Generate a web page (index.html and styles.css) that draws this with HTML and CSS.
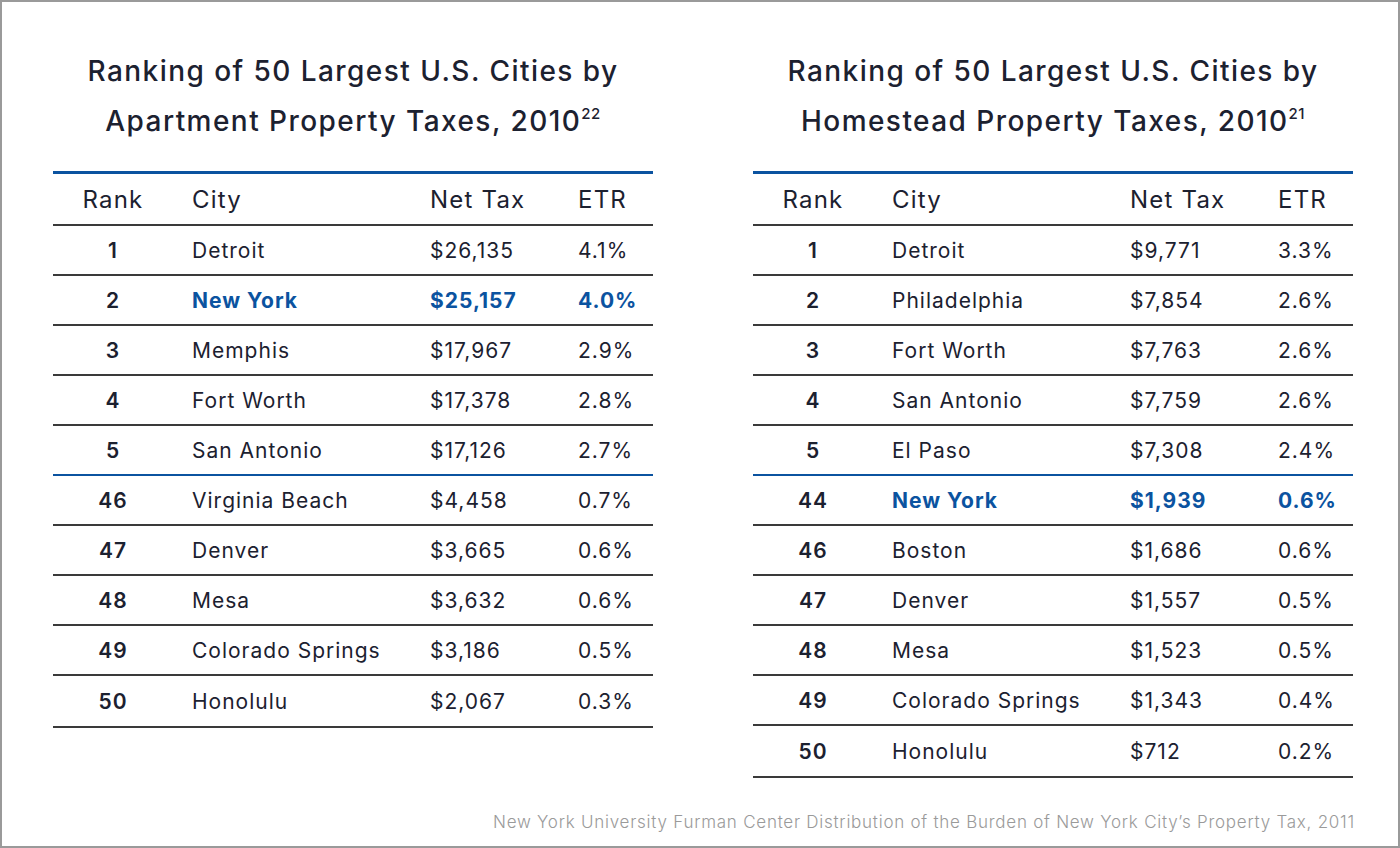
FILE: index.html
```html
<!DOCTYPE html>
<html>
<head>
<meta charset="utf-8">
<link rel="stylesheet" href="styles.css">
</head>
<body>
<div class="frame">
  <div class="panels">
    <section class="panel">
      <h2 class="title">Ranking of 50 Largest U.S. Cities by<br>Apartment Property Taxes, 2010<sup>22</sup></h2>
      <div class="table">
        <div class="row head"><span class="rank">Rank</span><span>City</span><span>Net Tax</span><span>ETR</span></div>
        <div class="row"><span class="rank">1</span><span>Detroit</span><span>$26,135</span><span>4.1%</span></div>
        <div class="row hl"><span class="rank">2</span><span>New York</span><span>$25,157</span><span>4.0%</span></div>
        <div class="row"><span class="rank">3</span><span>Memphis</span><span>$17,967</span><span>2.9%</span></div>
        <div class="row"><span class="rank">4</span><span>Fort Worth</span><span>$17,378</span><span>2.8%</span></div>
        <div class="row split"><span class="rank">5</span><span>San Antonio</span><span>$17,126</span><span>2.7%</span></div>
        <div class="row"><span class="rank">46</span><span>Virginia Beach</span><span>$4,458</span><span>0.7%</span></div>
        <div class="row"><span class="rank">47</span><span>Denver</span><span>$3,665</span><span>0.6%</span></div>
        <div class="row"><span class="rank">48</span><span>Mesa</span><span>$3,632</span><span>0.6%</span></div>
        <div class="row"><span class="rank">49</span><span>Colorado Springs</span><span>$3,186</span><span>0.5%</span></div>
        <div class="row"><span class="rank">50</span><span>Honolulu</span><span>$2,067</span><span>0.3%</span></div>
      </div>
    </section>
    <section class="panel">
      <h2 class="title">Ranking of 50 Largest U.S. Cities by<br>Homestead Property Taxes, 2010<sup>21</sup></h2>
      <div class="table">
        <div class="row head"><span class="rank">Rank</span><span>City</span><span>Net Tax</span><span>ETR</span></div>
        <div class="row"><span class="rank">1</span><span>Detroit</span><span>$9,771</span><span>3.3%</span></div>
        <div class="row"><span class="rank">2</span><span>Philadelphia</span><span>$7,854</span><span>2.6%</span></div>
        <div class="row"><span class="rank">3</span><span>Fort Worth</span><span>$7,763</span><span>2.6%</span></div>
        <div class="row"><span class="rank">4</span><span>San Antonio</span><span>$7,759</span><span>2.6%</span></div>
        <div class="row split"><span class="rank">5</span><span>El Paso</span><span>$7,308</span><span>2.4%</span></div>
        <div class="row hl"><span class="rank">44</span><span>New York</span><span>$1,939</span><span>0.6%</span></div>
        <div class="row"><span class="rank">46</span><span>Boston</span><span>$1,686</span><span>0.6%</span></div>
        <div class="row"><span class="rank">47</span><span>Denver</span><span>$1,557</span><span>0.5%</span></div>
        <div class="row"><span class="rank">48</span><span>Mesa</span><span>$1,523</span><span>0.5%</span></div>
        <div class="row"><span class="rank">49</span><span>Colorado Springs</span><span>$1,343</span><span>0.4%</span></div>
        <div class="row"><span class="rank">50</span><span>Honolulu</span><span>$712</span><span>0.2%</span></div>
      </div>
    </section>
  </div>
  <p class="source">New York University Furman Center Distribution of the Burden of New York City’s Property Tax, 2011</p>
</div>
</body>
</html>
```

FILE: styles.css
```css
html, body {
  margin: 0;
  padding: 0;
  background: #ffffff;
}

.frame {
  box-sizing: border-box;
  width: 1400px;
  height: 848px;
  border: 2px solid #9a9a9a;
  font-family: "Inter", "Open Sans", sans-serif;
  color: #1c2130;
  display: flex;
  flex-direction: column;
}

.panels {
  display: flex;
  gap: 100px;
  padding: 0 45px 0 51px;
}

.panel {
  width: 600px;
  display: flex;
  flex-direction: column;
}

.title {
  margin: 44px 0 0 0;
  height: 125px;
  font-size: 28px;
  font-weight: 500;
  line-height: 50px;
  text-align: center;
  letter-spacing: 1.45px;
}

.title sup {
  font-size: 15px;
  line-height: 0;
  vertical-align: 12px;
  letter-spacing: 0.5px;
}

.table {
  border-top: 3px solid #0b53a0;
}

.row {
  display: grid;
  grid-template-columns: 139px 238px 148px 1fr;
  align-items: center;
  height: 48px;
  border-bottom: 2px solid #3a3a3a;
  font-size: 21px;
  letter-spacing: 1px;
}

.row:last-child {
  height: 50px;
}

.row .rank {
  width: 120px;
  text-align: center;
  font-weight: 600;
}

.row.head {
  height: 50px;
  font-size: 24px;
  letter-spacing: 1.2px;
}

.row.head .rank {
  font-weight: 400;
}

.row.split {
  border-bottom-color: #0b53a0;
}

.row.hl span {
  color: #0b53a0;
  font-weight: 700;
}

.row.hl .rank {
  color: #1c2130;
  font-weight: 600;
}

.source {
  margin: auto 43px 14px 0;
  text-align: right;
  font-size: 17px;
  font-weight: 300;
  letter-spacing: 0.75px;
  color: #9a9a9a;
}
```
